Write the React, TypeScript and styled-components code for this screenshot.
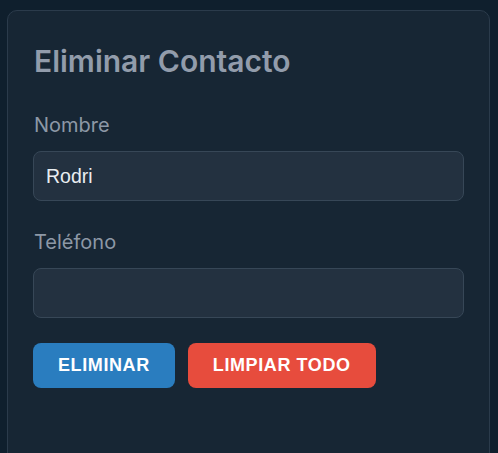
import styled, { createGlobalStyle } from "styled-components";

const GlobalStyle = createGlobalStyle`
  html, body {
    margin: 0;
    padding: 0;
    background: #0f1f2d;
    height: 100%;
    overflow: hidden;
  }
`;

const Page = styled.div`
  padding: 10px 7px 0 7px;
  width: 483px;
`;

const Card = styled.div`
  background: #172634;
  border: 1px solid #2b3b4b;
  border-radius: 10px;
  padding: 25px;
  height: 460px;
  box-sizing: border-box;
  font-family: Inter, "Noto Sans", sans-serif;
`;

const Title = styled.h2`
  margin: 7px 0 34px 1px;
  font-size: 30px;
  font-weight: 600;
  color: #929cab;
  line-height: 1.2;
`;

const Form = styled.form`
  display: flex;
  flex-direction: column;
  gap: 24px;
`;

const Field = styled.div`
  display: flex;
  flex-direction: column;
  gap: 14px;

  & + & {
    margin-top: 5px;
  }
`;

const Label = styled.label`
  font-size: 20px;
  color: #8d98a6;
  margin-left: 1px;
`;

const Input = styled.input`
  height: 50px;
  box-sizing: border-box;
  background: #233140;
  border: 1px solid #374757;
  border-radius: 8px;
  padding: 0 12px;
  font-family: "Liberation Sans", Arial, sans-serif;
  font-size: 19.5px;
  color: #e9edf1;
  outline: none;
`;

const Actions = styled.div`
  display: flex;
  gap: 13px;
  margin-top: 1px;
`;

const Button = styled.button<{ $tone: "blue" | "red" }>`
  height: 45px;
  padding: 0 25px;
  border: none;
  border-radius: 8px;
  background: ${(p) => (p.$tone === "blue" ? "#2a7dbf" : "#e74c3d")};
  color: #ffffff;
  font-family: "Liberation Sans", Arial, sans-serif;
  font-weight: 700;
  font-size: 18px;
  letter-spacing: 0.6px;
  text-transform: uppercase;
`;

export default function App() {
  return (
    <>
      <GlobalStyle />
      <Page>
        <Card>
          <Title>Eliminar Contacto</Title>
          <Form onSubmit={(e) => e.preventDefault()}>
            <Field>
              <Label>Nombre</Label>
              <Input defaultValue="Rodri" />
            </Field>
            <Field>
              <Label>Teléfono</Label>
              <Input defaultValue="" />
            </Field>
            <Actions>
              <Button type="button" $tone="blue">Eliminar</Button>
              <Button type="button" $tone="red">Limpiar todo</Button>
            </Actions>
          </Form>
        </Card>
      </Page>
    </>
  );
}
